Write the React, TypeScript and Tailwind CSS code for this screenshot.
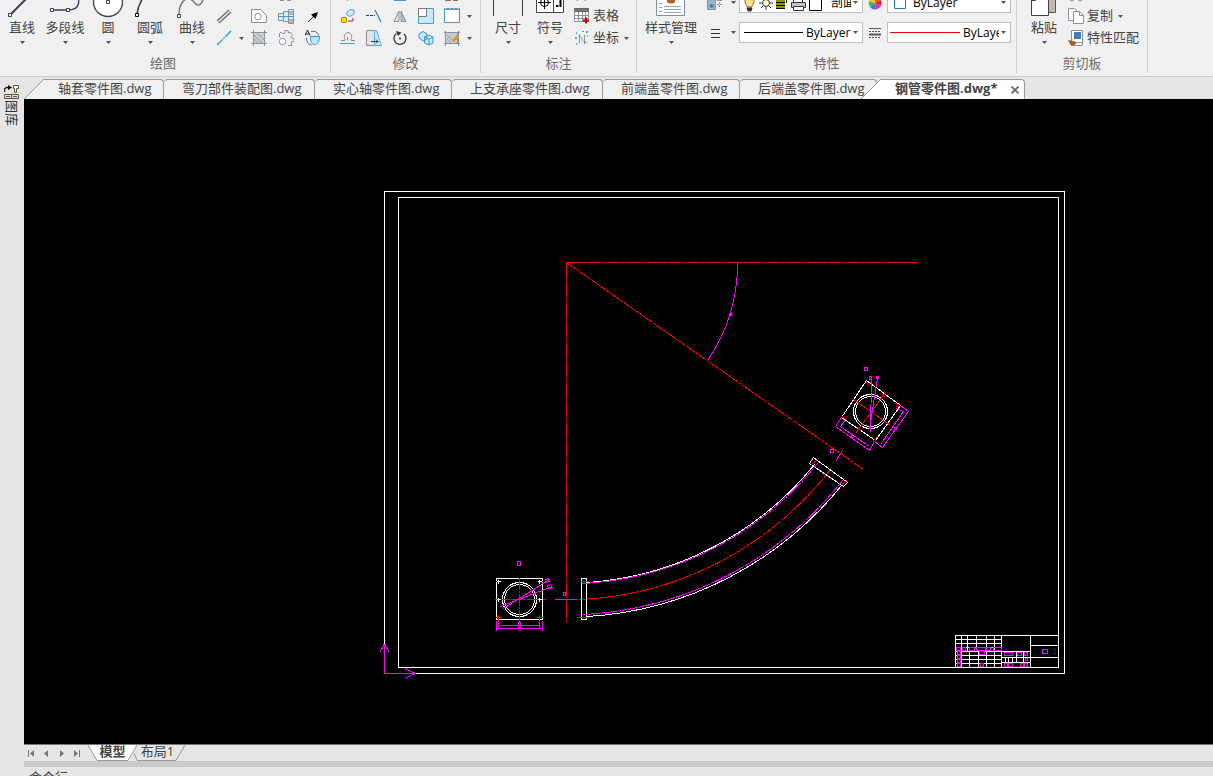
import type { ReactNode } from "react";

const DASH = "15 1 3 1";

function Caret({ className = "" }: { className?: string }) {
  return (
    <svg viewBox="0 0 5 3" className={`h-[3px] w-[5px] shrink-0 ${className}`}>
      <path d="M0 0h5L2.5 3z" fill="#555" />
    </svg>
  );
}

function BigButton({
  label,
  width = "w-[42px]",
  children,
}: {
  label: string;
  width?: string;
  children: ReactNode;
}) {
  return (
    <button className={`flex shrink-0 flex-col items-center pt-[3px] ${width}`}>
      <svg viewBox="0 0 32 32" className="size-8" fill="none" stroke="#3b3f4e">
        {children}
      </svg>
      <span className="mt-px leading-4 whitespace-nowrap">{label}</span>
      <Caret className="mt-1.5" />
    </button>
  );
}

function Icon({ children }: { children?: ReactNode }) {
  return (
    <svg
      viewBox="0 0 16 16"
      className="size-4 shrink-0"
      fill="none"
      stroke="#8a9199"
    >
      {children}
    </svg>
  );
}

function Tool({
  name,
  width = "w-[27px]",
  children,
}: {
  name: string;
  width?: string;
  children?: ReactNode;
}) {
  return (
    <button
      aria-label={name}
      className={`flex h-[22px] items-center justify-center ${width}`}
    >
      <Icon>{children}</Icon>
    </button>
  );
}

function TextTool({
  label,
  caret,
  children,
}: {
  label: string;
  caret?: boolean;
  children: ReactNode;
}) {
  return (
    <button className="flex h-[22px] items-center gap-[3px] whitespace-nowrap">
      <Icon>{children}</Icon>
      <span className="pb-0.5 leading-4">{label}</span>
      {caret && <Caret className="ml-0.5" />}
    </button>
  );
}

function MoreButton({ name }: { name: string }) {
  return (
    <button
      aria-label={name}
      className="flex h-[22px] w-2 items-center justify-center"
    >
      <Caret />
    </button>
  );
}

function Group({ title, width, children }: { title: string; width: string; children: ReactNode }) {
  return (
    <section
      className={`flex h-[90px] shrink-0 flex-col border-r border-[#d0d0d0] ${width}`}
    >
      <div className="flex h-[66px]">{children}</div>
      <h2 className="pt-1.5 text-center leading-4 text-[#6a6a6a]">{title}</h2>
    </section>
  );
}

function Combo({
  name,
  value,
  className = "w-[45px]",
  children,
}: {
  name: string;
  value: string;
  className?: string;
  children: ReactNode;
}) {
  return (
    <div className="flex h-[21px] w-[124px] items-center border border-[#c0c0c0] bg-white pl-0.5 text-xs text-black">
      {children}
      <select
        aria-label={name}
        className={`ml-auto h-4 appearance-none overflow-hidden bg-transparent leading-4 outline-none ${className}`}
      >
        <option>{value}</option>
      </select>
      <Caret className="mr-1 ml-0.5" />
    </div>
  );
}

function Ribbon() {
  return (
    <header className="flex h-[77px] shrink-0 items-end overflow-hidden border-b border-[#cbcbcb] bg-[#f0f0f0] pb-[3px]">
      <Group title="绘图" width="w-[331px] pr-1">
        <div className="flex pl-px">
          <BigButton label="直线">
            <path d="M5 28L28 5" strokeWidth="2" />
            <path d="M2.5 27.5h3v3h-3z" fill="#fff" />
          </BigButton>
          <BigButton label="多段线" width="w-[44px]">
            <path d="M3 24h16c12 0 12-8 9-18" strokeWidth="1.4" />
            <path d="M1.500 22.500h3v3h-3zM17.500 22.500h3v3h-3z" fill="#fff" />
          </BigButton>
          <BigButton label="圆">
            <circle cx="16" cy="16" r="14.500" fill="#fff" strokeWidth="1.300" />
            <path d="M14.500 14.500h3v3h-3z" fill="#fff" />
          </BigButton>
          <BigButton label="圆弧">
            <path d="M3 28C4 21 6 16 10 10l4-5" strokeWidth="1.600" />
            <path d="M1.500 27.500h3v3h-3z" fill="#fff" stroke="#000" />
          </BigButton>
          <BigButton label="曲线">
            <path
              d="M3 28C3 18 9 11 14 13s5 7 9 6 4-7 6-12"
              stroke="#777"
              strokeWidth="1.500"
            />
            <path d="M1.500 28.500h3v3h-3z" fill="#fff" />
          </BigButton>
        </div>
        <div className="flex">
          <div className="w-6">
            <Tool name="射线" width="w-6" />
            <Tool name="双线" width="w-6">
              <path d="M0 13L12 2M2 15L14 4" stroke="#6b6f78" strokeWidth="1.500" />
            </Tool>
            <Tool name="中心线" width="w-6">
              <path
                d="M0 15L14 1"
                stroke="#1a9be0"
                strokeWidth="1.300"
                strokeDasharray="8 1 2 1"
              />
            </Tool>
          </div>
          <div className="w-2 pt-11">
            <MoreButton name="更多线型" />
          </div>
          <div className="grid grid-cols-3">
            <Tool name="矩形" />
            <Tool name="轴">
              <path d="M2 14.500h4M9 14.500h4" />
            </Tool>
            <Tool name="箭头线" />
            <Tool name="孔">
              <path d="M.5 14.500v-13h9l6 6v7z" fill="#fafafa" />
              <circle cx="7" cy="8.500" r="3.200" fill="#fff" />
            </Tool>
            <Tool name="阶梯轴">
              <path d="M.5 5.500h5v7h-5zM5.500 3.500h5v10h-5zM10.500 1.500h5v14h-5z" fill="#dceaf3" />
              <path d="M11 3h4v4h-4zM11 11h4v4h-4z" fill="#a9b6c1" stroke="none" />
              <path d="M0 8.500h16" stroke="#3a99d8" />
            </Tool>
            <Tool name="箭头">
              <path d="M3 14l6-6" stroke="#222" />
              <path d="M13 4l-2.500 7L6 6.500z" fill="#000" stroke="none" />
            </Tool>
            <Tool name="填充">
              <path d="M2.500 2.500h11v11h-11z" fill="#c8cccf" />
              <path d="M3 5l8 8M6 3l7 7M3 9l4 4" stroke="#9aa0a5" />
              <path d="M0 2.500h16M0 13.500h16M2.500 0v16M13.500 0v16" />
            </Tool>
            <Tool name="齿形">
              <path d="M1.500 7V3.500L3 2l2 2 2-1V.5h3l.5 2.500 2-.5 2 2-1.500 2 .5 1.500 2.500.5v3l-2.500.5-.5 1.500 1 2h-4" fill="#eef1f3" />
              <circle cx="4.500" cy="11.500" r="3.200" fill="#fff" />
            </Tool>
            <Tool name="局部放大">
              <path d="M0 5.500L2.500 0 5 5.500M1 4h3" stroke="#222" />
              <path d="M6 1.500a7 7 0 018 4M1.500 8a7 7 0 005 7" stroke="#666" />
              <path d="M5.500 6.500h9c0 5-2 8-5 8s-4-3-4-8z" fill="#bfe3fa" stroke="#3796d5" />
            </Tool>
          </div>
        </div>
      </Group>

      <Group title="修改" width="w-[150px]">
        <div className="grid grid-cols-5 pl-1">
          <Tool name="移动" width="w-[26px]">
            <path d="M7.500 12v3" />
          </Tool>
          <Tool name="修剪" width="w-[26px]" />
          <Tool name="阵列" width="w-[26px]">
            <path d="M2 14.500h12" stroke="#5a87ac" />
          </Tool>
          <Tool name="圆角" width="w-[26px]" />
          <Tool name="分解" width="w-[26px]">
            <path d="M1 14.500h6M9 14.500h5" stroke="#a56a4d" />
          </Tool>
          <Tool name="复制对象" width="w-[26px]">
            <path d="M7 4l3-2.500 4 .5v4L10 8.500 7 7z" fill="#cdeafc" stroke="#48a2da" />
            <circle cx="4" cy="12" r="2.800" fill="#ffdc00" stroke="#9a8400" />
            <path d="M8 13h5v-3" stroke="#b02020" />
          </Tool>
          <Tool name="延伸" width="w-[26px]">
            <path d="M0 7.500h9" stroke="#333" strokeDasharray="3 1" />
            <path d="M9 2l6 12" stroke="#2088cf" strokeWidth="1.300" />
          </Tool>
          <Tool name="镜像" width="w-[26px]">
            <path d="M7 3v10.500H2z" fill="#e2e2e2" />
            <path d="M9 3v10.500h5z" fill="#a8c4d6" />
          </Tool>
          <Tool name="缩放" width="w-[26px]">
            <path d="M.5.500h15v15H.5z" fill="#c9e9fb" stroke="#4a9ed2" />
            <path d="M.5.500h8v8h-8z" fill="#fff" stroke="#777" />
          </Tool>
          <Tool name="拉伸" width="w-[26px]">
            <path d="M.5 1.500h15v13H.5z" fill="#fff" stroke="#8a8a8a" />
            <path d="M.5 14.500v-14h15v14" stroke="#2b9be0" strokeDasharray="3 1" />
          </Tool>
          <Tool name="偏移" width="w-[26px]">
            <path d="M1 10.500h4V9C3 7 5 2.500 8 2.500S13 7 11 9v1.500h4" />
            <path d="M0 13.500h15M7.500 10.500V7" stroke="#4a9ed2" />
          </Tool>
          <Tool name="倒角" width="w-[26px]">
            <path d="M.5.500h8v15h-8z" fill="#e3e3e3" />
            <path d="M8.500.5h2l5 15h-7z" fill="#c4e8fc" stroke="#62aedc" />
            <path d="M5 11.500h7m-2-2l2 2-2 2" stroke="#333" />
          </Tool>
          <Tool name="旋转" width="w-[26px]">
            <path d="M4.500 3.500a6 6 0 107.500.5" stroke="#333" strokeWidth="1.300" />
            <path d="M4 1l5.500 1.500L6 6z" fill="#333" stroke="none" />
            <circle cx="8" cy="8.500" r="1" fill="#333" stroke="none" />
          </Tool>
          <Tool name="三维" width="w-[26px]">
            <path
              d="M1 4l4-2.500L9 4v5l-4 2-4-3zM6.500 7L11 5l4 2v6l-4 2-4.500-2zM6.500 7l4.500 2 4-2M11 9v6"
              fill="#c4e8fc"
              stroke="#3c97cf"
            />
          </Tool>
          <Tool name="编辑" width="w-[26px]">
            <path d="M1.500 2.500h12v11h-12z" fill="#c8ccce" />
            <path d="M0 2.500h16M0 13.500h16M1.500 1v15M14.500 1v15" />
            <path d="M3 9l4 4M3 5l7 7" stroke="#a0a5a8" />
            <path d="M9 11l5-5" stroke="#e39b2c" strokeWidth="3" />
          </Tool>
        </div>
        <div className="pt-[22px]">
          <MoreButton name="更多拉伸" />
          <MoreButton name="更多编辑" />
        </div>
      </Group>

      <Group title="标注" width="w-[156px]">
        <div className="flex pl-1.5">
          <BigButton label="尺寸">
            <path d="M1.500 4v26M30.500 4v26M2 8h28" />
          </BigButton>
          <BigButton label="符号">
            <path d="M2.500 6.500h27v20h-27zM19.500 6v20" fill="#fff" />
            <circle cx="10.500" cy="16.500" r="4" stroke="#000" />
            <path d="M4 16.500h13M10.500 10v13" stroke="#000" />
            <path d="M22 20h2.500M26.500 12v9" stroke="#000" strokeWidth="2" />
          </BigButton>
        </div>
        <div className="pl-[3px]">
          <Tool name="引线" width="w-4">
            <path d="M3 15l2-2M9 13l3 2" />
          </Tool>
          <TextTool label="表格">
            <path d="M.5.500h14v13H.5zM.5 7.500h14M.5 10.500h14M4.500 3v10M8.500 3v10M11.500 3v10" fill="#fff" />
            <path d="M.5.500h14v3H.5z" fill="#777" stroke="#666" />
            <path d="M9 12.500h6M12 9.500v6" stroke="#c80000" strokeWidth="2" />
          </TextTool>
          <TextTool label="坐标" caret>
            <path d="M5.500 4v9M5 6.500c5 0 1 6 8 6M10.500 5v9" />
            <path d="M2 3h1M1 8h2M2 14h1M12 2h2M9 1v1M13 6h1" stroke="#2a8dcf" strokeWidth="1.500" />
          </TextTool>
        </div>
      </Group>

      <Group title="特性" width="w-[380px]">
        <BigButton label="样式管理" width="w-[68px]">
          <path d="M1.500 1.500h28v28h-28z" fill="#fff" stroke="#7890ab" />
          <path d="M4 17.500h3M4 21.500h3M4 25.500h3M9 20.500h17M9 23.500h17M9 26.500h17" stroke="#8da7c4" />
          <path d="M12 12h8v4c-2 2-6 2-8 0z" fill="#b5601f" stroke="none" />
        </BigButton>
        <div className="flex flex-col gap-[9px] pt-[9px] pl-0.5">
          <div className="flex h-[21px] items-center">
            <Icon>
              <path d="M.5 3.500h8v11h-8z" fill="#9fb3c4" />
              <circle cx="4.500" cy="11" r="2" fill="#4583b5" stroke="none" />
              <path d="M10 5.500h5M10 9.500h5M12.500 4v8" strokeDasharray="2 1" />
            </Icon>
            <button aria-label="图层工具" className="flex h-4 w-4 items-center justify-end pr-[3px]">
              <Caret />
            </button>
          </div>
          <div className="flex h-[21px] items-center">
            <Icon>
              <path d="M4 4.500h9M4 8.500h9M4 12.500h9" stroke="#333" />
            </Icon>
            <button aria-label="线宽" className="flex h-4 w-4 items-center justify-end pr-[3px]">
              <Caret />
            </button>
          </div>
        </div>
        <div className="flex flex-col gap-[9px] pt-[9px]">
          <Combo name="图层" value="剖面线" className="w-[20px]">
            <svg viewBox="0 0 80 19" className="h-[19px] w-20 shrink-0" fill="none" stroke="#333">
              <path d="M3 8a4.500 4.500 0 019 0c0 3-2 4-2 6H5c0-2-2-3-2-6z" fill="#ffe48a" stroke="#776b45" />
              <path d="M5 15h5l-1 3H6z" fill="#333" />
              <circle cx="24" cy="10" r="3.500" fill="#fff9cf" />
              <path d="M24 3v3M24 14v3M17 10h3M28 10h3M19 5l2 2M29 5l-2 2M19 15l2-2M29 15l-2-2" />
              <path d="M34 7h9v9h-9z" fill="#8b9300" stroke="none" />
              <path d="M34 9.500h9M34 12.500h9M34 15.500h9M44.500 5v5" stroke="#111" />
              <path d="M51.500 5.500h9v6h-9z" fill="#fff" />
              <path d="M49.500 9.500h14v5h-14z" fill="#bfc5cc" />
              <path d="M51.500 13.500h10v4h-10z" fill="#fff" />
              <path d="M67.500 4.500h12v13h-12z" fill="#fff" stroke="#000" />
            </svg>
          </Combo>
          <Combo name="线型" value="ByLayer">
            <svg viewBox="0 0 59 3" className="ml-0.5 h-[3px] w-[59px] shrink-0">
              <path d="M0 1h59v1H0z" fill="#000" />
            </svg>
          </Combo>
        </div>
        <div className="flex w-6 flex-col items-center gap-[9px] pt-[9px]">
          <div className="flex h-[21px] items-center">
            <svg viewBox="0 0 16 16" className="size-4">
              <path d="M8 8V1.500A6.500 6.500 0 0114 5z" fill="#fa5400" />
              <path d="M8 8l6-3a6.500 6.500 0 010 6z" fill="#e51c48" />
              <path d="M8 8l6 3a6.500 6.500 0 01-5 3.500z" fill="#e22fa9" />
              <path d="M8 8l1 6.500A6.500 6.500 0 013 12z" fill="#3f6fe2" />
              <path d="M8 8l-5 4a6.500 6.500 0 01-1-6z" fill="#43ba45" />
              <path d="M8 8L2 6a6.500 6.500 0 016-4.500z" fill="#ffc317" />
            </svg>
          </div>
          <div className="flex h-[21px] items-center">
            <Icon>
              <path d="M2 3.500h12" stroke="#555" />
              <path d="M2 6.500h12M2 12.500h12" stroke="#555" strokeDasharray="2 1" />
              <path d="M2 9.500h12" stroke="#555" strokeWidth="2" />
            </Icon>
          </div>
        </div>
        <div className="flex flex-col gap-[9px] pt-[9px]">
          <Combo name="颜色" value="ByLayer" className="w-[86px]">
            <svg viewBox="0 0 12 12" className="ml-1 size-3">
              <path d="M.5.500h11v11H.5z" fill="#fff" stroke="#1a7fd4" />
            </svg>
          </Combo>
          <Combo name="线宽样式" value="ByLayer" className="w-9">
            <svg viewBox="0 0 70 3" className="h-[3px] w-[70px] shrink-0">
              <path d="M0 1h70v1H0z" fill="#f00000" />
            </svg>
          </Combo>
        </div>
      </Group>

      <Group title="剪切板" width="w-[131px]">
        <div className="pl-[3px]">
          <BigButton label="粘贴" width="w-12">
            <path d="M10.500 2.500h17v24h-17z" fill="#c1b8a9" stroke="#555" />
            <path d="M3.500 11.500h4v3h-4zM3.500 29.500v-17h17v17z" fill="#fff" />
          </BigButton>
        </div>
        <div>
          <Tool name="剪切" width="w-4">
            <circle cx="4" cy="13" r="2" />
            <circle cx="12" cy="13" r="2" />
          </Tool>
          <TextTool label="复制" caret>
            <path d="M.5.500h6l3 3v9h-9z" fill="#fff" />
            <path d="M5.500 3.500h6l4 4v8h-10zM11.500 3.500v4h4" fill="#fff" />
          </TextTool>
          <TextTool label="特性匹配">
            <path d="M3.500.5h11v15h-11z" fill="#fff" />
            <path d="M6 2h7v7H6z" fill="#3e7eb4" stroke="none" />
            <path d="M5 12.500h9" />
            <path d="M0 10l5 1 3 1v2l-4 2-2-2z" fill="#a95b17" stroke="none" />
          </TextTool>
        </div>
      </Group>
    </header>
  );
}

const FILES = [
  { name: "弯刀部件装配图.dwg", width: "w-[151px]" },
  { name: "实心轴零件图.dwg", width: "w-[137px]" },
  { name: "上支承座零件图.dwg", width: "w-[151px]" },
  { name: "前端盖零件图.dwg", width: "w-[137px]" },
  { name: "后端盖零件图.dwg", width: "w-[137px]" },
];

function Slope({ fill }: { fill: string }) {
  return (
    <svg viewBox="0 0 20 20" className="h-5 w-5 shrink-0" fill={fill}>
      <path d="M0 20L20 0v20z" />
      <path d="M0 20L19.500.5H20" stroke="#999" />
    </svg>
  );
}

function FileTabs() {
  return (
    <nav className="flex h-[22px] shrink-0 items-end bg-[#e6e6e6] text-[#444]">
      <Slope fill="#f0f0f0" />
      <button className="h-5 w-[120px] shrink-0 rounded-tr-sm border-t border-r border-[#999] bg-[#f0f0f0] pb-[3px] pl-3.5 text-left leading-4 whitespace-nowrap">
        轴套零件图.dwg
      </button>
      {FILES.map(({ name, width }) => (
        <button
          key={name}
          className={`h-5 shrink-0 rounded-t-sm border-t border-r border-[#999] bg-[#f0f0f0] pb-[3px] pl-[18px] text-left leading-4 whitespace-nowrap ${width}`}
        >
          {name}
        </button>
      ))}
      <div className="relative -ml-4 flex shrink-0">
        <Slope fill="#fff" />
        <div className="flex h-5 w-[144px] items-center justify-between rounded-tr-sm border-t border-r border-[#999] bg-white pr-[5px] pl-3.5">
          <button className="pb-[3px] leading-4 font-bold whitespace-nowrap">
            钢管零件图.dwg*
          </button>
          <button aria-label="关闭">
            <svg viewBox="0 0 8 8" className="size-2" stroke="#666" strokeWidth="1.600">
              <path d="M.5.500l7 7M7.500.5l-7 7" />
            </svg>
          </button>
        </div>
      </div>
    </nav>
  );
}

// [x, y, w, h] of the text placeholders in the title block
const TITLE_TEXTS = [
  [956, 647, 4, 3],
  [962, 647, 3, 3],
  [969, 647, 5, 3],
  [976, 647, 9, 3],
  [986, 647, 4, 3],
  [993, 647, 8, 3],
  [979, 651, 5, 3],
  [957, 651, 3, 3],
  [957, 655, 3, 3],
  [957, 659, 3, 3],
  [957, 663, 3, 3],
  [980, 663, 3, 3],
  [1004, 652, 8, 3],
  [1017, 652, 4, 3],
  [1024, 652, 3, 3],
  [1025, 658, 2, 2],
  [1004, 663, 3, 3],
  [1008, 663, 4, 3],
  [1020, 663, 3, 3],
  [1024, 663, 3, 3],
  [1042, 649, 5, 4],
];

function Drawing() {
  return (
    <svg
      viewBox="24 99 1189 645"
      preserveAspectRatio="xMinYMin meet"
      className="block h-full w-full"
      fill="none"
      shapeRendering="crispEdges"
      role="img"
      aria-label="钢管零件图"
    >
      <g transform="translate(.5 .5)">
        {/* frame */}
        <g stroke="#fff">
          <path d="M384 191h680v482H384zM398 197h660v470H398z" />
        </g>

        {/* axes */}
        <g stroke="#f00">
          <path d="M566 262h350" strokeDasharray={DASH} />
          <path d="M566 262v360" strokeDasharray={DASH} />
          <path d="M566 262l297 207" strokeDasharray="30 1 3 1" />
          <path d="M580 599A337 337 0 00830 469" strokeDasharray={DASH} />
        </g>
        <g stroke="#f0f">
          <path d="M737 263A171 171 0 01707 360" />
          <path d="M728 314h4M729 313h2v2h-2z" />
          <path d="M554 599h22M563 592h2v3h-2z" />
          <path d="M842 450l-7 11M830 449h3v3h-3z" />
        </g>

        {/* pipe */}
        <g stroke="#fff">
          <path d="M587 582A320 320 0 00814 464M587 616A354 354 0 00841 485" />
          <path d="M581 578h5v41h-5zM813 457l34 25-4 4-34-23z" />
        </g>
        <g stroke="#f0f" strokeDasharray="18 1">
          <path d="M582 583A322 322 0 00817 463" />
          <path d="M582 614A352 352 0 00842 480" />
        </g>
        <g stroke="#f00">
          <path d="M580 581h8M576 617h12M811 464l6-5M841 485l5-5" />
        </g>

        {/* lower flange */}
        <g stroke="#fff">
          <path d="M496 578h46v41h-46z" />
          <circle cx="519" cy="599" r="17" />
          <circle cx="519" cy="599" r="15" />
        </g>
        <g stroke="#f00">
          <path d="M494 599h51" strokeDasharray="12 1 2 1" />
          <path d="M519 577v45" strokeDasharray="12 1 2 1" />
          <path d="M495 581h6M536 581h6M495 617h6M498 614v6M536 617h6M539 614v6" />
        </g>
        <g stroke="#fff">
          <path d="M498 579v4M496 581h4M539 579v4M537 581h4M498 597v4M496 599h4M539 597v4M537 599h4" />
        </g>
        <g stroke="#f0f">
          <path d="M496 620v10M542 620v10M498 620v7M539 620v7M500 625h38M496 628h46M518 622h2v5h-2z" />
          <path d="M503 608l46-29M500 606l52-20M545 579l3-1 1 3-3 1zM547 586l3-2 2 3-3 1z" />
          <path d="M517 561h3v4h-3z" />
        </g>

        {/* upper flange */}
        <g stroke="#fff">
          <path d="M866 380l34 25-25 35-34-23z" />
          <circle cx="870" cy="411" r="17" />
          <circle cx="870" cy="411" r="15" />
        </g>
        <g stroke="#f00">
          <path d="M852 398l38 27M885 392l-30 41" />
          <path d="M866 382l4 4M870 382l-4 4M842 416l4 4M846 416l-4 4M895 403l4 4M899 403l-4 4M872 437l4 4M876 437l-4 4M881 393l4 4M857 427l4 4" />
        </g>
        <g stroke="#f0f">
          <path d="M871 376l-1 56M877 377l-8 52M869 376h2v3h-2zM876 376h2v2h-2z" />
          <path d="M841 417l-6 9 34 24 5-9M845 419l-5 7 29 20M851 435h2v2h-2z" />
          <path d="M900 405l8 6-26 36-8-6M896 408l7 3-23 33M894 427h2v2h-2z" />
          <path d="M864 367h3v3h-3z" />
        </g>

        {/* title block */}
        <g stroke="#fff">
          <path d="M955 667v-32h103M1001 635v32M1030 635v32" />
          <path d="M955 639h46M955 643h46M955 647h46M955 651h75M955 655h46M955 659h46M955 663h46" />
          <path d="M961 635v32M967 635v16M976 635v16M986 635v32M994 635v32M969 651v16M978 651v16" />
          <path d="M1001 657h29M1001 662h29M1005 657v5M1008 657v5M1012 657v5M1016 651v11M1023 651v11M1030 645h28M1030 657h28" />
        </g>
        <g stroke="#f0f">
          {TITLE_TEXTS.map(([x, y, w, h]) => (
            <rect key={`${x}-${y}`} x={x} y={y} width={w} height={h} />
          ))}
        </g>

        {/* ucs marker */}
        <g stroke="#f0f">
          <path d="M384 644v29h30M379 652l5-8 5 8M405 668l9 5-9 5" />
          <path d="M383 644h2v1h-2zM413 672h1v2h-1z" />
        </g>
      </g>
    </svg>
  );
}

function LayoutTabs() {
  return (
    <nav className="flex h-[17px] shrink-0 items-start border-t border-[#777] bg-[#e6e6e6] text-[#444]">
      <div className="flex w-16 shrink-0 items-center justify-around pt-1 pr-1">
        {[
          ["首页", "M1 1h1v7H1zM7 1v7L3 4.500z"],
          ["上一页", "M6 1v7L2 4.500z"],
          ["下一页", "M3 1v7l4-3.500z"],
          ["末页", "M7 1h1v7H7zM2 1v7l4-3.500z"],
        ].map(([name, d]) => (
          <button key={name} aria-label={name}>
            <svg viewBox="0 0 9 9" className="block size-[9px]" fill="#777">
              <path d={d} />
            </svg>
          </button>
        ))}
      </div>
      <button className="relative h-4 w-[49px] shrink-0 pb-1 leading-3 font-bold">
        <svg viewBox="0 0 49 16" className="absolute inset-0 h-4 w-[49px]">
          <path d="M0 0l9 15.500h31L49 0" fill="#fff" stroke="#999" />
        </svg>
        <span className="relative">模型</span>
      </button>
      <button className="relative h-4 w-[49px] shrink-0 pr-2 pb-1 leading-3 whitespace-nowrap">
        <svg viewBox="0 0 53 16" className="absolute top-0 -left-1 h-4 w-[53px]">
          <path d="M1 8l3 7.500h39L52 0" fill="none" stroke="#999" />
        </svg>
        <span className="relative">布局1</span>
      </button>
    </nav>
  );
}

export default function App() {
  return (
    <div className="flex h-screen flex-col overflow-hidden bg-[#e6e6e6] font-['Open_Sans','Noto_Sans_CJK_SC',sans-serif] text-[13px] text-[#444]">
      <Ribbon />
      <div className="flex min-h-0 flex-1">
        <aside className="w-6 shrink-0 pt-[7px]">
          <button className="flex w-full flex-col items-center text-[#333]">
            <svg viewBox="0 0 16 16" className="size-4" fill="none" stroke="#222">
              <path d="M0 0h16v16H0z" fill="#e9e7d2" stroke="none" />
              <path d="M.5 8V5l2-1.500H4" strokeWidth="1.300" />
              <path d="M4 1l4 2.500L4 6z" fill="#000" stroke="none" />
              <path d="M9.500 1.500h5v3h-2v4h-2v-4h-1z" fill="#f4f4f4" stroke="#555" />
              <path d="M.5 10.500h14v4H.5zM2 12.500h4M9 12.500h4M7.500 11v3" fill="#ddd" stroke="#555" />
            </svg>
            <span className="leading-4 [text-orientation:sideways] [writing-mode:vertical-rl]">
              图库
            </span>
          </button>
        </aside>
        <div className="flex min-w-0 flex-1 flex-col">
          <FileTabs />
          <main className="min-h-0 flex-1 bg-black">
            <Drawing />
          </main>
          <LayoutTabs />
          <div className="h-1.5 shrink-0 bg-[#cbcbcb]" />
          <footer className="h-[9px] shrink-0 overflow-hidden pt-0.5 pl-[5px] leading-4">
            命令行
          </footer>
        </div>
      </div>
    </div>
  );
}
